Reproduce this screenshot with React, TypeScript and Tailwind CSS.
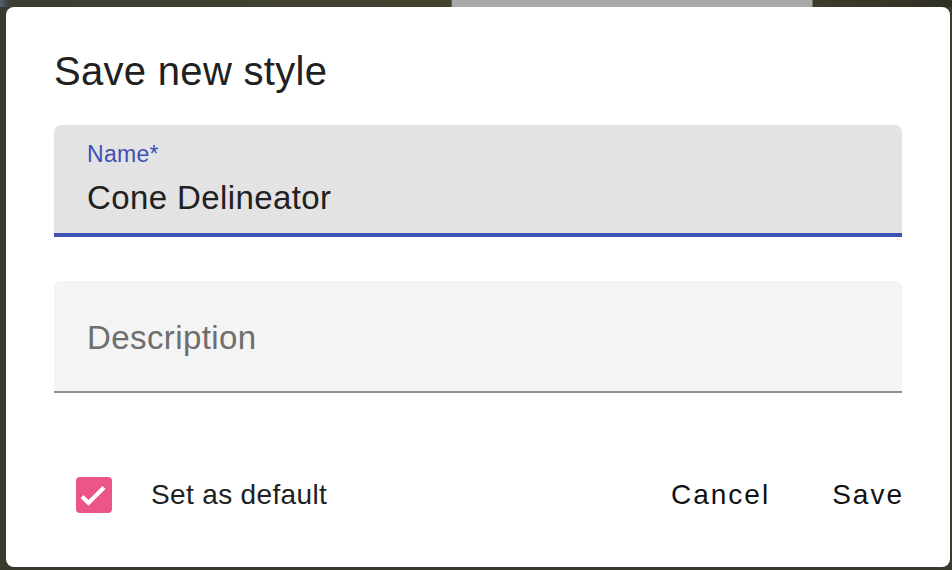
import React from "react";

const CheckBox: React.FC = () => (
  <span className="flex h-[36px] w-[36px] shrink-0 items-center justify-center rounded-[4px] bg-[#ec5588]">
    <svg width="36" height="36" viewBox="0 0 36 36" fill="none">
      <path d="M6 19.5 L12.5 26 L28 10.5" stroke="#fff" strokeWidth="4" />
    </svg>
  </span>
);

const SaveStyleDialog: React.FC = () => (
  <div className="flex h-[560px] w-[944px] flex-col rounded-[8px] bg-white px-[48px] font-['Liberation_Sans',Arial,sans-serif] text-[#212121]">
    {/* title */}
    <h2 className="pt-[32px] text-[40px] leading-[64px] tracking-[0.3px]">Save new style</h2>

    {/* name field, focused */}
    <div className="mt-[22px] h-[112px] rounded-t-[7px] border-b-4 border-[#3f51b5] bg-[#e3e3e3] pl-[33px] pt-[18px]">
      <div className="text-[23px] leading-[23px] tracking-[0.3px] text-[#3f51b5]">Name*</div>
      <div className="mt-[15px] text-[33px] leading-[33px] tracking-[0.4px]">Cone Delineator</div>
    </div>

    {/* description field */}
    <div className="mt-[44px] flex h-[112px] items-center rounded-t-[7px] border-b-2 border-[#8f8f8f] bg-[#f4f4f4] pl-[33px] pt-[3px]">
      <span className="text-[33px] leading-[33px] tracking-[0.4px] text-[#6e6e6e]">Description</span>
    </div>

    {/* actions */}
    <div className="mt-[77px] flex h-[50px] items-center">
      <div className="flex items-center pl-[22px]">
        <CheckBox />
        <span className="ml-[39px] text-[28px] leading-[28px] tracking-[0.35px]">Set as default</span>
      </div>
      <div className="ml-auto flex items-center gap-[62px] text-[28px] leading-[28px] tracking-[2px] text-[#111]">
        <button className="cursor-pointer">Cancel</button>
        <button className="mr-[-2px] cursor-pointer">Save</button>
      </div>
    </div>
  </div>
);

export default function App() {
  return (
    <div className="h-[570px] w-[952px] overflow-hidden bg-[linear-gradient(180deg,transparent_7px,#3a3a2d_7px),linear-gradient(90deg,#4d6274_0%,#3b3d33_1%,#45432f_47.4%,#a9a9a9_47.5%,#a9a9a9_85.3%,#3f3c2a_85.4%,#2f2f24_100%)] pl-[6px] pt-[7px]">
      <SaveStyleDialog />
    </div>
  );
}
